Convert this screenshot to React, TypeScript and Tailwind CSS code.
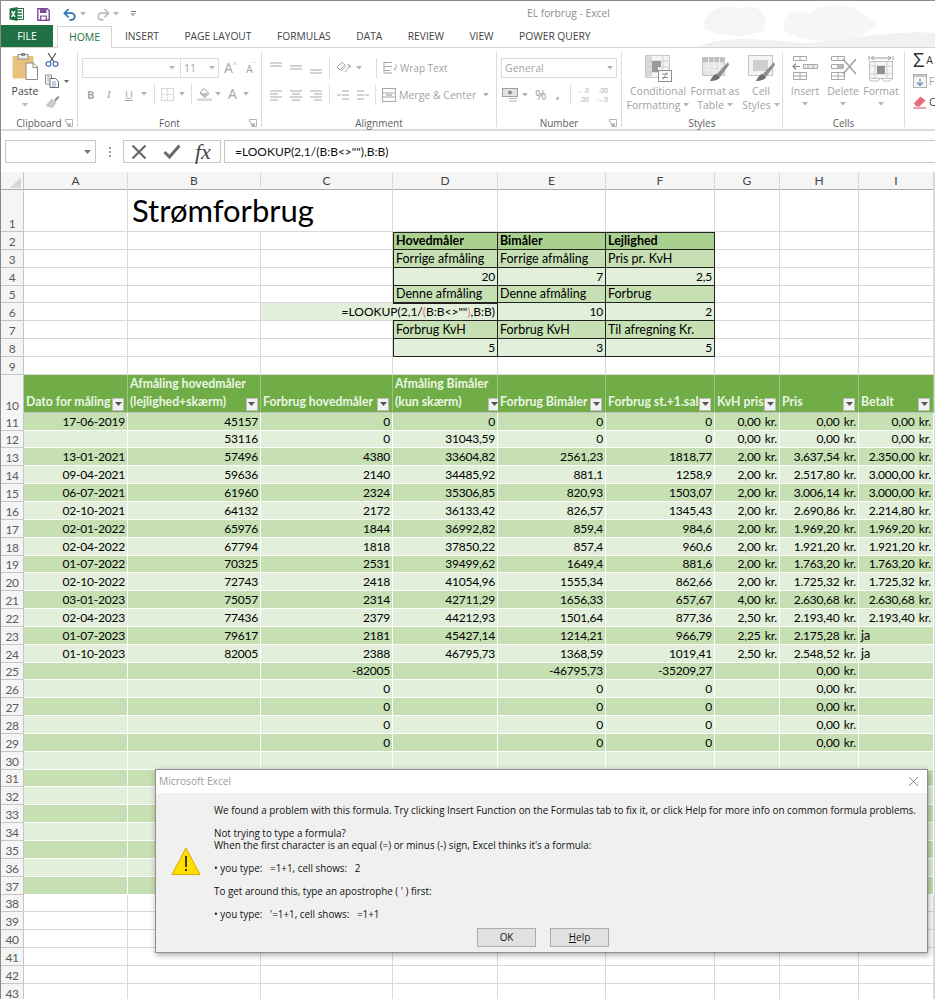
import type { ReactNode } from "react";

const GRID = "grid grid-cols-[23px_104px_133px_132px_105px_108px_109px_65px_79px_75px_1fr]";
const UI = "font-['Open_Sans',sans-serif]";
const SHEET = "font-['Lato','Liberation_Sans',sans-serif]";
const NUM = "text-[12px] tracking-[-0.2px] [word-spacing:1.5px]";

const Caret = ({ className = "" }: { className?: string }) => (
  <svg width="6" height="4" viewBox="0 0 6 4" className={className}>
    <path d="M0 0h6L3 3.5z" fill="#b4b4b4" />
  </svg>
);

const Sep = () => <div className="w-px h-[20px] bg-[#dedede]" />;

function Lines({ rows }: { rows: number[][] }) {
  return (
    <svg width="14" height="14" viewBox="0 0 14 14">
      {rows.map((r, i) => (
        <path key={i} d={`M${r[0]} ${r[2]}H${r[1]}`} stroke="#a8a8a8" strokeWidth="1" />
      ))}
    </svg>
  );
}

function ExcelLogo() {
  return (
    <svg width="15" height="14" viewBox="0 0 15 14">
      <rect x="6" y="1.5" width="8.5" height="11" fill="#fff" stroke="#217346" />
      <path d="M8 4h5M8 7h5M8 10h5" stroke="#217346" strokeWidth="1.5" />
      <path d="M0.5 1.5 8.5 0v14l-8-1.5z" fill="#217346" />
      <path d="M2.6 4.2 6 9.8M6 4.2 2.6 9.8" stroke="#fff" strokeWidth="1.4" />
    </svg>
  );
}

function SaveIcon() {
  return (
    <svg width="13" height="13" viewBox="0 0 13 13">
      <path d="M0.8.8h9.6l1.8 1.8v9.6H.8z" fill="#fff" stroke="#7e4a9c" strokeWidth="1.4" />
      <rect x="3" y="1" width="6.5" height="4" fill="#7e4a9c" />
      <rect x="3" y="7.5" width="7" height="4.5" fill="#7e4a9c" />
      <rect x="4.2" y="8.6" width="4.5" height="3" fill="#fff" />
    </svg>
  );
}

function UndoIcon({ color, flip }: { color: string; flip?: boolean }) {
  return (
    <svg width="14" height="13" viewBox="0 0 14 13" className={flip ? "-scale-x-100" : ""}>
      <path d="M2 5.2h6.5a3.3 3.3 0 0 1 0 6.6H6.5" fill="none" stroke={color} strokeWidth="1.7" />
      <path d="M5.6 1 1.4 5.2l4.2 4.2" fill="none" stroke={color} strokeWidth="1.7" />
    </svg>
  );
}

function PasteIcon() {
  return (
    <svg width="26" height="27" viewBox="0 0 26 27">
      <rect x="0.5" y="3" width="21" height="22.5" rx="1" fill="#e8c27c" />
      <rect x="6" y="1.5" width="10" height="4.5" fill="#f2f2f2" stroke="#8c8c8c" />
      <rect x="9" y="0" width="4" height="3" fill="#8c8c8c" />
      <path d="M14 10h7.5l4 4v12.5H14z" fill="#fff" stroke="#8a8a8a" />
      <path d="M21 10v4.500h4.500" fill="none" stroke="#8a8a8a" />
    </svg>
  );
}

function ScissorsIcon() {
  return (
    <svg width="14" height="14" viewBox="0 0 14 14">
      <path d="M3 0 9 9M11 0 5 9" stroke="#555" strokeWidth="1.2" />
      <circle cx="3.500" cy="11" r="2.300" fill="none" stroke="#4a7fb5" strokeWidth="1.300" />
      <circle cx="10.500" cy="11" r="2.300" fill="none" stroke="#4a7fb5" strokeWidth="1.300" />
    </svg>
  );
}

function CopyIcon() {
  return (
    <svg width="14" height="14" viewBox="0 0 14 14">
      <path d="M.5 1h6l0 9h-6z" fill="#fff" stroke="#8f8f8f" />
      <path d="M5 4.500h5.500l3 3v6H5z" fill="#fff" stroke="#6d6d6d" />
      <path d="M2 3h3M2 5h2M2 7h2M7 8h4M7 10h4M7 12h4" stroke="#5b8cc0" strokeWidth=".8" />
    </svg>
  );
}

function PainterIcon() {
  return (
    <svg width="15" height="14" viewBox="0 0 15 14">
      <path d="M9 5 13 1l1.500 1.500-4 4z" fill="#8c8c8c" />
      <path d="M1 10 6.500 3.500l5 4.500L7 13.500 5 12l-1 .8-1-1.300L1.800 12z" fill="#c9c9c9" />
    </svg>
  );
}

const Letter = ({ children, className = "" }: { children: ReactNode; className?: string }) => (
  <span className={`text-[#a6a6a6] leading-none ${className}`}>{children}</span>
);

function BigCellIcon({ kind }: { kind: "cond" | "table" | "styles" }) {
  if (kind === "cond")
    return (
      <svg width="27" height="27" viewBox="0 0 27 27">
        <rect x="0.500" y="0.500" width="24" height="22" fill="#f4f4f4" stroke="#c9c9c9" />
        <path d="M6 1v21M18 1v21M1 6h23M1 12h23M1 17h23" stroke="#cfcfcf" />
        <rect x="7" y="6" width="9" height="6" fill="#9a9a9a" />
        <rect x="7" y="12" width="6" height="5" fill="#9a9a9a" />
        <rect x="1" y="1" width="5" height="21" fill="#c4c4c4" opacity=".5" />
        <rect x="13.500" y="15.500" width="13" height="11" fill="#fff" stroke="#8e8e8e" />
        <path d="M17 19h6M17 22.500h6M22 17.500l-4 7" stroke="#8e8e8e" />
      </svg>
    );
  if (kind === "table")
    return (
      <svg width="27" height="27" viewBox="0 0 27 27">
        <rect x="0.500" y="2.500" width="22" height="18" fill="#e4e4e4" stroke="#c4c4c4" />
        <rect x="1" y="3" width="21" height="4" fill="#bdbdbd" />
        <path d="M1 11h21M1 15.500h21M6.500 3v17M12 3v17M17.500 3v17" stroke="#f4f4f4" />
        <path d="M26 7 15 19l3 3L27 10z" fill="#8f8f8f" />
        <path d="M15 19c-3 0-5 3-7 7 4 0 9-1 10-4z" fill="#6f6f6f" />
      </svg>
    );
  return (
    <svg width="27" height="27" viewBox="0 0 27 27">
      <rect x="0.500" y="0.500" width="24" height="20" fill="#f4f4f4" stroke="#c4c4c4" />
      <rect x="5" y="5" width="15" height="11" fill="#cfcfcf" />
      <path d="M26 7 15 19l3 3L27 10z" fill="#8f8f8f" />
      <path d="M15 19c-3 0-5 3-7 7 4 0 9-1 10-4z" fill="#6f6f6f" />
    </svg>
  );
}

function InsertIcon({ kind }: { kind: "insert" | "delete" | "format" }) {
  if (kind === "format")
    return (
      <svg width="26" height="27" viewBox="0 0 26 27">
        <path d="M1 1v4M25 1v4M3 3h20M3 3l3-2M3 3l3 2M23 3l-3-2M23 3l-3 2" stroke="#9a9a9a" fill="none" />
        <rect x="1.500" y="6.500" width="23" height="17" fill="#f6f6f6" stroke="#c0c0c0" />
        <path d="M7 7v16M19 7v16M2 11h22M2 19h22" stroke="#cfcfcf" />
        <rect x="9" y="11" width="8" height="8" fill="#8f8f8f" />
        <path d="M2 24v2h8l2-2M14 24l2 2h6l2-2" fill="none" stroke="#c0c0c0" />
      </svg>
    );
  return (
    <svg width="28" height="26" viewBox="0 0 28 26">
      <path d="M2.500 1.500h13v4h-13zM9 1.500v4M2.500 17.500h13v7h-13zM9 17.500v7M2.500 21h13" fill="#fff" stroke="#a6a6a6" />
      {kind === "insert" ? (
        <>
          <path d="M12.500 9.500h14v4h-14zM17 9.500v4M22 9.500v4" fill="#ededed" stroke="#a6a6a6" />
          <path d="M2 11.500h7M5 8.500l-3 3 3 3" fill="none" stroke="#888" strokeWidth="1.200" />
        </>
      ) : (
        <>
          <path d="M2.500 9.500h12v4h-12z" fill="#fff" stroke="#a6a6a6" />
          <rect x="8" y="9.500" width="7" height="4" fill="#b8b8b8" />
          <path d="M14 4 27 19M27 4 14 19" stroke="#a2a2a2" strokeWidth="1.600" />
        </>
      )}
    </svg>
  );
}

function Group({ label, width, launcher, children }: { label: string; width: string; launcher?: boolean; children: ReactNode }) {
  return (
    <div className={`${width} shrink-0 h-[75px] mt-[4px] flex flex-col border-r border-[#dcdcdc] relative`}>
      <div className="flex-1 min-h-0">{children}</div>
      <div className="h-[14px] translate-y-[3px] flex items-center justify-center text-[10px] leading-none text-[#5d5d5d]">{label}</div>
      {launcher && (
        <svg width="8" height="8" viewBox="0 0 8 8" className="absolute right-[4px] bottom-0">
          <path d="M.5 3V.5H7.500V7.500H5" fill="none" stroke="#b5b5b5" />
          <path d="M1 3.500 5 7M5 4v3H2" fill="none" stroke="#8b8b8b" />
        </svg>
      )}
    </div>
  );
}

function BigButton({ icon, lines, caretInline, width }: { icon: ReactNode; lines: string[]; caretInline?: boolean; width: string }) {
  return (
    <div className={`${width} flex flex-col items-center text-[10.500px] leading-[14px] text-[#a2a2a2]`}>
      <div className="h-[29px] flex items-start">{icon}</div>
      {lines.map((l, i) => (
        <div key={l} className="whitespace-nowrap flex items-center gap-[3px]">
          {l}
          {caretInline && i === lines.length - 1 && <Caret />}
        </div>
      ))}
      {!caretInline && <Caret className="mt-[4px]" />}
    </div>
  );
}

function Ribbon() {
  return (
    <div className={`${UI} h-[83px] flex border-b-2 border-[#dadada] bg-white`}>
      <Group label="Clipboard" width="w-[77px]" launcher>
        <div className="flex pl-[11px] pt-[1px] gap-[7px]">
          <div className="flex flex-col items-center w-[26px]">
            <PasteIcon />
            <span className="text-[10.500px] leading-none text-[#444] mt-[6px]">Paste</span>
            <Caret className="mt-[6px]" />
          </div>
          <div className="flex flex-col gap-[7px]">
            <ScissorsIcon />
            <div className="flex items-center gap-[5px]">
              <CopyIcon />
              <svg width="5" height="3" viewBox="0 0 5 3">
                <path d="M0 0h5L2.500 3z" fill="#666" />
              </svg>
            </div>
            <PainterIcon />
          </div>
        </div>
      </Group>

      <Group label="Font" width="w-[184px]" launcher>
        <div className="flex items-center pl-[4px] pt-[6px]">
          <div className="w-[99px] h-[20px] border border-[#dcdcdc] flex items-center justify-end pr-[5px]">
            <Caret />
          </div>
          <div className="w-[38px] h-[20px] border border-l-0 border-[#dcdcdc] flex items-center justify-between px-[3px]">
            <Letter className="text-[10.500px]">11</Letter>
            <Caret />
          </div>
          <Letter className="text-[14px] ml-[5px]">A</Letter>
          <span className="text-[7px] leading-none self-start mt-[3px] text-[#aaa]">^</span>
          <Letter className="text-[11px] ml-[9px]">A</Letter>
          <span className="text-[7px] leading-none self-start mt-[3px] text-[#aaa]">ˇ</span>
        </div>
        <div className="flex items-center pl-[9px] mt-[8px] h-[16px]">
          <Letter className="text-[11px] font-bold w-[20px]">B</Letter>
          <Letter className="text-[11px] italic font-['Liberation_Serif',serif] w-[18px]">I</Letter>
          <Letter className="text-[11px] underline w-[16px]">U</Letter>
          <Caret className="mr-[7px]" />
          <Sep />
          <svg width="13" height="13" viewBox="0 0 13 13" className="ml-[6px] mr-[5px]">
            <rect x=".5" y=".5" width="12" height="12" fill="none" stroke="#b0b0b0" strokeDasharray="1 1" />
            <path d="M6.500 1v11M1 6.500h11" stroke="#c4c4c4" strokeDasharray="1 1" />
          </svg>
          <Caret className="mr-[6px]" />
          <Sep />
          <svg width="15" height="14" viewBox="0 0 15 14" className="ml-[5px] mr-[3px]">
            <path d="M3 6 7 1.500l5 5L8 10.500z" fill="#fff" stroke="#9a9a9a" />
            <path d="M3 6h8l-3 4.500z" fill="#bcbcbc" />
            <rect x="0" y="11.500" width="15" height="2.500" fill="#d9d9d9" />
          </svg>
          <Caret className="mr-[7px]" />
          <Letter className="text-[14px] mr-[6px]">A</Letter>
          <Caret />
        </div>
      </Group>

      <Group label="Alignment" width="w-[235px]">
        <div className="flex items-center pl-[7px] pt-[6px] h-[26px]">
          <div className="flex gap-[6px]">
            <Lines rows={[[1, 13, 2], [1, 13, 5]]} />
            <Lines rows={[[1, 13, 5], [1, 13, 8]]} />
            <Lines rows={[[1, 13, 9], [1, 13, 12]]} />
          </div>
          <div className="ml-[6px] mr-[6px]"><Sep /></div>
          <svg width="15" height="14" viewBox="0 0 15 14">
            <path d="M1 6 6 1l3 3-5 5zM5 10l5-5M9 11l5-7M14 4h-3M14 4v3" fill="none" stroke="#a8a8a8" />
          </svg>
          <Caret className="ml-[5px]" />
          <div className="ml-[14px] mr-[6px]"><Sep /></div>
          <svg width="15" height="14" viewBox="0 0 15 14">
            <path d="M1 1.500h8M1 5.500h8M1 9.500h6M1 1v11h8" fill="none" stroke="#a8a8a8" />
            <path d="M11 8c3 0 3-4 1-5M11 8l2 2M11 8l2-1" fill="none" stroke="#a8a8a8" />
          </svg>
          <span className="ml-[2px] text-[10px] leading-none text-[#a2a2a2]">Wrap Text</span>
        </div>
        <div className="flex items-center pl-[7px] mt-[7px] h-[20px]">
          <div className="flex gap-[6px]">
            <Lines rows={[[1, 13, 3], [1, 9, 6], [1, 13, 9], [1, 9, 12]]} />
            <Lines rows={[[1, 13, 3], [3, 11, 6], [1, 13, 9], [3, 11, 12]]} />
            <Lines rows={[[1, 13, 3], [5, 13, 6], [1, 13, 9], [5, 13, 12]]} />
          </div>
          <div className="ml-[6px] mr-[6px]"><Sep /></div>
          <div className="flex gap-[6px]">
            <Lines rows={[[6, 13, 3], [1, 5, 7], [6, 13, 7], [6, 13, 11]]} />
            <Lines rows={[[1, 8, 3], [9, 13, 7], [1, 8, 7], [1, 8, 11]]} />
          </div>
          <div className="ml-[5px] mr-[6px]"><Sep /></div>
          <svg width="15" height="14" viewBox="0 0 15 14">
            <rect x=".5" y=".5" width="13" height="13" fill="#fff" stroke="#a8a8a8" />
            <path d="M1 5h12M1 9h12" stroke="#a8a8a8" />
            <path d="M4 7h6" stroke="#8e8e8e" />
          </svg>
          <span className="ml-[2px] text-[10.500px] leading-none text-[#a2a2a2] whitespace-nowrap">Merge &amp; Center</span>
          <Caret className="ml-[7px]" />
        </div>
      </Group>

      <Group label="Number" width="w-[125px]" launcher>
        <div className="pl-[4px] pt-[6px]">
          <div className="w-[116px] h-[20px] border border-[#dcdcdc] flex items-center justify-between px-[3px]">
            <Letter className="text-[10.500px]">General</Letter>
            <Caret />
          </div>
        </div>
        <div className="flex items-center pl-[5px] mt-[7px] h-[20px]">
          <svg width="16" height="14" viewBox="0 0 16 14" className="mr-[4px]">
            <rect x=".5" y=".5" width="15" height="8" fill="#e2e2e2" stroke="#a0a0a0" />
            <circle cx="8" cy="4.500" r="2" fill="#8e8e8e" />
            <path d="M7 10.500h8M7 13h8" stroke="#b4b4b4" />
          </svg>
          <Caret className="mr-[7px]" />
          <span className="text-[14px] leading-none text-[#a2a2a2] w-[21px]">%</span>
          <span className="text-[13px] font-bold leading-none text-[#a2a2a2] w-[14px] -mt-[3px]">,</span>
          <Sep />
          <div className="ml-[6px] flex gap-[7px] text-[6.500px] leading-[9px] text-[#a8a8a8] text-right">
            <span>←.0<br />.00</span>
            <span>.00<br />→.0</span>
          </div>
        </div>
      </Group>

      <Group label="Styles" width="w-[161px]">
        <div className="flex pt-[3px] pl-[4px]">
          <BigButton width="w-[64px]" icon={<BigCellIcon kind="cond" />} lines={["Conditional", "Formatting"]} caretInline />
          <BigButton width="w-[50px]" icon={<BigCellIcon kind="table" />} lines={["Format as", "Table"]} caretInline />
          <BigButton width="w-[42px]" icon={<BigCellIcon kind="styles" />} lines={["Cell", "Styles"]} caretInline />
        </div>
      </Group>

      <Group label="Cells" width="w-[122px]">
        <div className="flex pt-[3px] pl-[3px]">
          <BigButton width="w-[38px]" icon={<InsertIcon kind="insert" />} lines={["Insert"]} />
          <BigButton width="w-[38px]" icon={<InsertIcon kind="delete" />} lines={["Delete"]} />
          <BigButton width="w-[38px]" icon={<InsertIcon kind="format" />} lines={["Format"]} />
        </div>
      </Group>

      <div className="flex-1 flex flex-col gap-[7px] pl-[8px] pt-[5px] text-[10.500px] leading-none">
        <div className="flex items-center gap-[2px] h-[14px] text-[#333]">
          <span className="text-[20px] leading-none">Σ</span>
          <span>A</span>
        </div>
        <div className="flex items-center gap-[2px] h-[14px] text-[#a2a2a2]">
          <svg width="14" height="14" viewBox="0 0 14 14">
            <rect x=".5" y=".5" width="13" height="13" fill="#f6f6f6" stroke="#b0b0b0" />
            <rect x="1" y="1" width="12" height="2" fill="#c4c4c4" />
            <path d="M7 4.500v7M4 8.500l3 3 3-3" fill="none" stroke="#6f8fb0" strokeWidth="1.200" />
          </svg>
          <span className="text-[10px]">Fi</span>
        </div>
        <div className="flex items-center gap-[2px] h-[14px] text-[#444]">
          <svg width="14" height="14" viewBox="0 0 14 14">
            <path d="M1 8 7.500 1.500l5 4-6 6H3z" fill="#e46c7e" />
            <path d="M0 13h13" stroke="#d84a5f" />
          </svg>
          <span>C</span>
        </div>
      </div>
    </div>
  );
}

function FormulaBar() {
  return (
    <div className={`${SHEET} h-[41px] flex items-start pt-[9px] bg-white`}>
      <div className="ml-[4px] w-[91px] h-[23px] border border-[#c6c6c6] flex items-center justify-end pr-[4px]">
        <svg width="7" height="4" viewBox="0 0 7 4">
          <path d="M0 0h7L3.500 4z" fill="#777" />
        </svg>
      </div>
      <div className="w-[27px] h-[23px] flex flex-col items-center justify-center gap-[2px]">
        <i className="w-[2px] h-[2px] bg-[#9a9a9a]" />
        <i className="w-[2px] h-[2px] bg-[#9a9a9a]" />
        <i className="w-[2px] h-[2px] bg-[#9a9a9a]" />
      </div>
      <div className="w-[98px] h-[23px] border border-[#c6c6c6] flex items-center pl-[7px]">
        <svg width="16" height="16" viewBox="0 0 16 16">
          <path d="M1.500 1.500 14.500 14.500M14.500 1.500 1.500 14.500" stroke="#6a6a6a" strokeWidth="2.200" />
        </svg>
        <svg width="18" height="15" viewBox="0 0 18 15" className="ml-[16px]">
          <path d="M1.500 8 6.500 13 16.500 1.500" fill="none" stroke="#6a6a6a" strokeWidth="3" />
        </svg>
        <span className="ml-[14px] font-['Liberation_Serif',serif] italic text-[22px] leading-none text-[#444]">fx</span>
      </div>
      <div className="ml-[3px] flex-1 h-[23px] border border-r-0 border-[#c6c6c6] flex items-center pl-[10px] text-[12px] text-[#111]">
        {'=LOOKUP(2,1/(B:B<>""),B:B)'}
      </div>
    </div>
  );
}

function ColumnHeaders() {
  const letters = ["A", "B", "C", "D", "E", "F", "G", "H", "I", ""];
  return (
    <div className={`${GRID} ${SHEET} h-[18px] bg-[#f5f5f5] border-b border-[#ababab] text-[12px] text-[#444]`}>
      <div className="border-r border-[#c4c4c4] flex items-end justify-end pr-[2px] pb-[2px]">
        <svg width="11" height="11" viewBox="0 0 11 11">
          <path d="M11 0v11H0z" fill="#d8d8d8" />
        </svg>
      </div>
      {letters.map((l) => (
        <div key={l || "J"} className="border-r border-[#d8d8d8] flex items-center justify-center">
          {l}
        </div>
      ))}
    </div>
  );
}

function FilterButton() {
  return (
    <span className="shrink-0 w-[12px] h-[13px] bg-[#f2f2f2] border border-[#bdbdbd] flex items-center justify-center">
      <svg width="7" height="4" viewBox="0 0 7 4">
        <path d="M0 0h7L3.500 4z" fill="#555" />
      </svg>
    </span>
  );
}

function Row({ n, height = "h-[17.85px]", children }: { n: number; height?: string; children?: ReactNode }) {
  return (
    <div className={`${GRID} ${height} overflow-visible`}>
      <div className="bg-[#f5f5f5] border-r border-b border-[#c6c6c6] flex items-end justify-center text-[12px] tracking-[-0.4px] leading-[15px] text-[#5c5c5c]">
        {n}
      </div>
      {children}
    </div>
  );
}

const Blank = ({ className = "" }: { className?: string }) => (
  <div className={`border-r border-b border-[#d9d9d9] ${className}`} />
);

function SummaryCell({ text, bg, bold, right, extra = "" }: { text: string; bg: string; bold?: boolean; right?: boolean; extra?: string }) {
  return (
    <div
      className={`${bg} border-r border-b border-[#222] flex items-end px-[2px] leading-[16px] whitespace-nowrap ${
        right ? `justify-end ${NUM}` : ""
      } ${bold ? "font-bold" : ""} ${extra}`}
    >
      {text}
    </div>
  );
}

const summary = [
  { n: 2, bg: "bg-[#a9d08e]", bold: true, cells: ["Hovedmåler", "Bimåler", "Lejlighed"] },
  { n: 3, bg: "bg-[#c6e0b4]", cells: ["Forrige afmåling", "Forrige afmåling", "Pris pr. KvH"] },
  { n: 4, bg: "bg-[#e2efda]", right: true, cells: ["20", "7", "2,5"] },
  { n: 5, bg: "bg-[#c6e0b4]", cells: ["Denne afmåling", "Denne afmåling", "Forbrug"] },
  { n: 6, bg: "bg-[#e2efda]", right: true, cells: ["", "10", "2"] },
  { n: 7, bg: "bg-[#c6e0b4]", cells: ["Forbrug KvH", "Forbrug KvH", "Til afregning Kr."] },
  { n: 8, bg: "bg-[#e2efda]", right: true, cells: ["5", "3", "5"] },
];

const headers: { lines: string[] }[] = [
  { lines: ["Dato for måling"] },
  { lines: ["Afmåling hovedmåler", "(lejlighed+skærm)"] },
  { lines: ["Forbrug hovedmåler"] },
  { lines: ["Afmåling Bimåler", "(kun skærm)"] },
  { lines: ["Forbrug Bimåler"] },
  { lines: ["Forbrug st.+1.sal"] },
  { lines: ["KvH pris"] },
  { lines: ["Pris"] },
  { lines: ["Betalt"] },
];

const rows: string[][] = [
  ["17-06-2019", "45157", "0", "0", "0", "0", "0,00 kr.", "0,00 kr.", "0,00 kr."],
  ["", "53116", "0", "31043,59", "0", "0", "0,00 kr.", "0,00 kr.", "0,00 kr."],
  ["13-01-2021", "57496", "4380", "33604,82", "2561,23", "1818,77", "2,00 kr.", "3.637,54 kr.", "2.350,00 kr."],
  ["09-04-2021", "59636", "2140", "34485,92", "881,1", "1258,9", "2,00 kr.", "2.517,80 kr.", "3.000,00 kr."],
  ["06-07-2021", "61960", "2324", "35306,85", "820,93", "1503,07", "2,00 kr.", "3.006,14 kr.", "3.000,00 kr."],
  ["02-10-2021", "64132", "2172", "36133,42", "826,57", "1345,43", "2,00 kr.", "2.690,86 kr.", "2.214,80 kr."],
  ["02-01-2022", "65976", "1844", "36992,82", "859,4", "984,6", "2,00 kr.", "1.969,20 kr.", "1.969,20 kr."],
  ["02-04-2022", "67794", "1818", "37850,22", "857,4", "960,6", "2,00 kr.", "1.921,20 kr.", "1.921,20 kr."],
  ["01-07-2022", "70325", "2531", "39499,62", "1649,4", "881,6", "2,00 kr.", "1.763,20 kr.", "1.763,20 kr."],
  ["02-10-2022", "72743", "2418", "41054,96", "1555,34", "862,66", "2,00 kr.", "1.725,32 kr.", "1.725,32 kr."],
  ["03-01-2023", "75057", "2314", "42711,29", "1656,33", "657,67", "4,00 kr.", "2.630,68 kr.", "2.630,68 kr."],
  ["02-04-2023", "77436", "2379", "44212,93", "1501,64", "877,36", "2,50 kr.", "2.193,40 kr.", "2.193,40 kr."],
  ["01-07-2023", "79617", "2181", "45427,14", "1214,21", "966,79", "2,25 kr.", "2.175,28 kr.", "ja"],
  ["01-10-2023", "82005", "2388", "46795,73", "1368,59", "1019,41", "2,50 kr.", "2.548,52 kr.", "ja"],
  ["", "", "-82005", "", "-46795,73", "-35209,27", "", "0,00 kr.", ""],
  ["", "", "0", "", "0", "0", "", "0,00 kr.", ""],
  ["", "", "0", "", "0", "0", "", "0,00 kr.", ""],
  ["", "", "0", "", "0", "0", "", "0,00 kr.", ""],
  ["", "", "0", "", "0", "0", "", "0,00 kr.", ""],
  ...Array.from({ length: 8 }, () => Array(9).fill("")),
];

function Sheet() {
  return (
    <div className={`${SHEET} text-[12.500px] text-black`}>
      <Row n={1} height="h-[42px]">
        <Blank />
        <div className="col-span-2 border-r border-b border-[#d9d9d9] flex items-center pl-[4px] text-[31px] leading-none text-black">
          Strømforbrug
        </div>
        <Blank />
        <Blank />
        <Blank />
        <Blank />
        <Blank />
        <Blank />
        <Blank />
      </Row>
      {summary.map((s) => (
        <Row key={s.n} n={s.n}>
          <Blank />
          <Blank />
          {s.n === 6 ? <Blank className="bg-[#e2efda]" /> : <Blank />}
          {s.n === 6 ? (
            <div className="bg-[#e2efda] border-r border-b border-t border-[#222] flex items-end justify-end px-[2px] text-[12px] leading-[16px] whitespace-nowrap">
              <span>
                =LOOKUP(2,1/<span className="text-[#e07c7c]">(</span>
                {'B:B<>""'}
                <span className="text-[#e07c7c]">)</span>,B:B)
              </span>
            </div>
          ) : (
            <SummaryCell
              text={s.cells[0]}
              bg={s.bg}
              bold={s.bold}
              right={s.right}
              extra={`border-l ${s.n === 2 ? "border-t" : ""}`}
            />
          )}
          <SummaryCell text={s.cells[1]} bg={s.bg} bold={s.bold} right={s.right} extra={s.n === 2 ? "border-t" : ""} />
          <SummaryCell text={s.cells[2]} bg={s.bg} bold={s.bold} right={s.right} extra={s.n === 2 ? "border-t" : ""} />
          <Blank />
          <Blank />
          <Blank />
          <Blank />
        </Row>
      ))}
      <Row n={9}>
        {Array.from({ length: 10 }, (_, i) => (
          <Blank key={i} />
        ))}
      </Row>
      <Row n={10} height="h-[38px]">
        {headers.map((h) => (
          <div
            key={h.lines[0]}
            className="bg-[#70ad47] border-r border-[#9cc781] border-b-2 border-b-[#c2c2c2] flex items-end justify-between pl-[2px] pr-[3px] pb-[1px] font-bold text-[12.250px] text-[#ebf5e4] leading-[18px] whitespace-nowrap"
          >
            <span>
              {h.lines.map((l) => (
                <span key={l} className="block">
                  {l}
                </span>
              ))}
            </span>
            <FilterButton />
          </div>
        ))}
        <div className="border-b-2 border-b-[#c2c2c2] border-l border-[#d9d9d9]" />
      </Row>
      {rows.map((r, i) => (
        <Row key={i} n={i + 11}>
          {r.map((v, c) => (
            <div
              key={c}
              className={`${i % 2 === 0 ? "bg-[#c6e0b4]" : "bg-[#e2efda]"} border-r border-b border-white flex items-end px-[2px] leading-[16px] whitespace-nowrap ${
                v === "ja" ? "" : `justify-end ${NUM}`
              }`}
            >
              {v}
            </div>
          ))}
          <Blank />
        </Row>
      ))}
      {Array.from({ length: 6 }, (_, i) => (
        <Row key={i} n={i + 38}>
          {Array.from({ length: 10 }, (_, c) => (
            <Blank key={c} />
          ))}
        </Row>
      ))}
    </div>
  );
}

function ErrorDialog() {
  return (
    <div className={`${UI} absolute left-[154px] top-[768px] w-[773px] h-[184px] bg-[#f0f0f0] border border-[#8f8f8f] shadow-[1px_2px_6px_rgba(0,0,0,0.35)] flex flex-col text-[9.875px] leading-[11.500px] text-[#111]`}>
      <div className="h-[23px] shrink-0 bg-white flex items-center justify-between pl-[3px] pr-[8px] text-[#9a9a9a] text-[10.250px]">
        <span>Microsoft Excel</span>
        <svg width="11" height="11" viewBox="0 0 11 11">
          <path d="M1 1l9 9M10 1l-9 9" stroke="#8a8a8a" />
        </svg>
      </div>
      <div className="flex-1 flex relative pl-[15px]">
        <svg width="30" height="28" viewBox="0 0 30 28" className="shrink-0 mt-[54px]">
          <path d="M15 1 29 27.500H1z" fill="#ffde00" stroke="#dba800" />
          <path d="M15 9v11" stroke="#111" strokeWidth="1.600" />
          <path d="M15 22v2" stroke="#111" strokeWidth="1.800" />
        </svg>
        <div className="ml-[13px] pt-[12px] whitespace-nowrap">
          <p>We found a problem with this formula. Try clicking Insert Function on the Formulas tab to fix it, or click Help for more info on common formula problems.</p>
          <p className="mt-[11.500px]">Not trying to type a formula?</p>
          <p>When the first character is an equal (=) or minus (-) sign, Excel thinks it's a formula:</p>
          <p className="mt-[11.500px] whitespace-pre">{"• you type:   =1+1, cell shows:   2"}</p>
          <p className="mt-[11.500px]">To get around this, type an apostrophe ( ' ) first:</p>
          <p className="mt-[11.500px] whitespace-pre">{"• you type:   '=1+1, cell shows:   =1+1"}</p>
        </div>
        <div className="absolute left-[321px] bottom-[5px] flex gap-[14px]">
          <div className="w-[59px] h-[19px] bg-[#e1e1e1] border border-[#adadad] flex items-center justify-center">OK</div>
          <div className="w-[59px] h-[19px] bg-[#e1e1e1] border border-[#adadad] flex items-center justify-center">
            <span><span className="underline">H</span>elp</span>
          </div>
        </div>
      </div>
    </div>
  );
}

export default function App() {
  const tabs = ["INSERT", "PAGE LAYOUT", "FORMULAS", "DATA", "REVIEW", "VIEW", "POWER QUERY"];
  return (
    <div className="relative w-[935px] h-[999px] overflow-hidden bg-white border-l border-t border-[#8a8a8a]">
      <svg width="280" height="46" viewBox="0 0 280 46" className="absolute right-0 top-0">
        <path d="M50 28C45 10 70 0 85 8c12-6 30 0 24 22-20 8-40 6-59-2z" fill="#f5f5f5" />
        <path d="M130 30c-8-14 10-24 26-18 12-12 40-8 48-2 4 4 14 8 18 14-6 6-14 10-24 14-24 4-52 2-68-8z" fill="#f6f6f6" />
        <path d="M40 46c40-14 70-6 110-4 40-2 90-14 130-10v14z" fill="#f1f1f1" />
      </svg>
      <div className={`${UI} relative h-[24px] flex items-center pl-[8px] pt-[2px]`}>
        <ExcelLogo />
        <div className="ml-[13px]"><SaveIcon /></div>
        <div className="ml-[13px]"><UndoIcon color="#2f74b5" /></div>
        <Caret className="ml-[3px]" />
        <div className="ml-[10px]"><UndoIcon color="#bdbdbd" flip /></div>
        <Caret className="ml-[3px]" />
        <span className="ml-[11px] flex flex-col items-center gap-[1px]">
          <i className="w-[5px] h-px bg-[#777]" />
          <Caret />
        </span>
        <span className="absolute left-[526px] text-[10.250px] text-[#8e8e8e]">EL forbrug - Excel</span>
      </div>
      <div className={`${UI} relative h-[23px] flex items-end text-[10.500px] leading-none text-[#444] border-b border-[#d4d4d4]`}>
        <div className="w-[52px] h-[22px] bg-[#1f7145] text-white flex items-center justify-center">FILE</div>
        <div className="ml-[4px] -mb-px w-[55px] h-[22px] bg-white border border-b-0 border-[#d4d4d4] text-[#217346] flex items-center justify-center">HOME</div>
        <div className="ml-[13px] flex gap-[25.500px] h-[22px] items-center whitespace-nowrap text-[10.250px]">
          {tabs.map((t) => (
            <span key={t}>{t}</span>
          ))}
        </div>
      </div>
      <Ribbon />
      <FormulaBar />
      <ColumnHeaders />
      <Sheet />
      <ErrorDialog />
    </div>
  );
}
